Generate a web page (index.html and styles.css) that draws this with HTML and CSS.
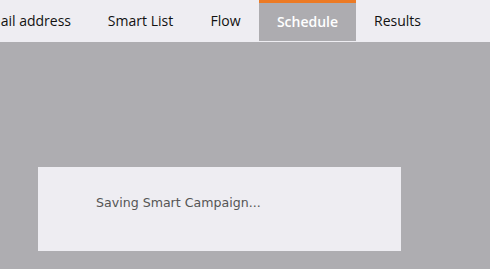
FILE: index.html
```html
<!DOCTYPE html>
<html lang="en">
<head>
    <meta charset="UTF-8">
    <meta name="viewport" content="width=device-width, initial-scale=1.0">
    <title>Smart Campaign</title>
    <link rel="stylesheet" href="styles.css">
</head>
<body>
    <div class="tabbar">
        <div class="tab tab-first">Email address</div>
        <div class="tab tab-list">Smart List</div>
        <div class="tab tab-flow">Flow</div>
        <div class="tab tab-schedule active">Schedule</div>
        <div class="tab tab-results">Results</div>
    </div>

    <div class="overlay">
        <div class="dialog">
            <p class="message">Saving Smart Campaign...</p>
        </div>
    </div>
</body>
</html>
```

FILE: styles.css
```css
html, body {
    margin: 0;
    height: 100%;
}
body {
    display: flex;
    flex-direction: column;
    background-color: #aeadb1;
    overflow: hidden;
}
.tabbar {
    display: flex;
    height: 41px;
    padding-bottom: 1px;
    background-color: #eeedf2;
    font-family: "Open Sans", sans-serif;
    font-size: 14px;
    color: #111;
}
.tab {
    flex: none;
    box-sizing: border-box;
    height: 41px;
    line-height: 41px;
    text-align: center;
    white-space: nowrap;
}
.tab-first {
    width: 129px;
    margin-left: -40px;
    text-align: right;
    padding-right: 18px;
}
.tab-list {
    width: 103px;
}
.tab-flow {
    width: 67px;
}
.tab-schedule {
    width: 97px;
}
.tab-results {
    width: 83px;
}
.tab.active {
    background-color: #adacb0;
    border-top: 3px solid #ec7a24;
    line-height: 37px;
    color: #fff;
    font-weight: 600;
}
.overlay {
    flex: 1;
    padding: 125px 0 0 38px;
}
.dialog {
    width: 363px;
    height: 84px;
    box-sizing: border-box;
    padding: 28px 0 0 58px;
    background-color: #eeedf2;
}
.message {
    margin: 0;
    font-family: "DejaVu Sans", Verdana, sans-serif;
    font-size: 12.6px;
    line-height: 16px;
    color: #555;
}
```
